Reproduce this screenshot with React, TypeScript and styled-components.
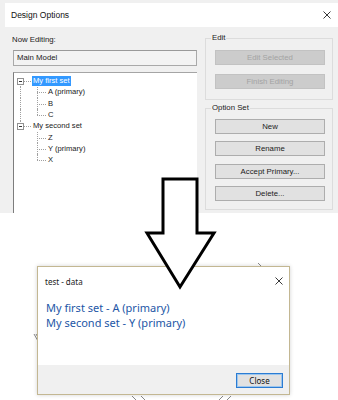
import React from 'react';
import styled, { createGlobalStyle } from 'styled-components';

const GlobalStyle = createGlobalStyle`
  html, body { margin: 0; padding: 0; background: #fff; }
  body { font-family: "Liberation Sans", Arial, sans-serif; }
  * { box-sizing: border-box; }
`;

const Page = styled.div`
  position: relative;
  width: 338px;
  height: 400px;
  overflow: hidden;
  background: #fff;
`;

/* ---------- Top dialog ---------- */
const Window = styled.div`
  width: 338px;
  height: 213px;
  background: #f0f0f0;
  padding: 3px 0 0 5px;
  display: flex;
  flex-direction: column;
`;

const TitleBar = styled.div`
  flex: none;
  height: 24px;
  background: #fff;
  display: flex;
  align-items: center;
  justify-content: space-between;
  padding: 0 7px 0 6px;
  font-family: "Liberation Sans", Arial, sans-serif;
  font-size: 8.5px;
  color: #111;
`;

const CloseGlyph = styled.svg`
  display: block;
  width: 8px;
  height: 8px;
`;

const Body = styled.div`
  flex: 1;
  min-height: 0;
  display: grid;
  grid-template-columns: 184px 128px;
  column-gap: 8px;
  padding-left: 8px;
`;

const LeftCol = styled.div`
  display: flex;
  flex-direction: column;
  min-height: 0;
  padding-top: 7px;
`;

const FieldLabel = styled.div`
  height: 12px;
  line-height: 12px;
  margin-left: -1px;
  font-size: 7.8px;
  color: #1a1a1a;
`;

const TextBox = styled.div`
  margin-top: 4px;
  height: 16px;
  border: 1px solid #a9a9a9;
  border-top-color: #9a9a9a;
  background: #f3f3f3;
  padding-left: 3px;
  font-size: 7.8px;
  line-height: 14px;
  color: #1a1a1a;
`;

const Tree = styled.div`
  margin-top: 6px;
  flex: 1;
  min-height: 0;
  background: #fff;
  border-top: 1px solid #a5a5a5;
  border-left: 1px solid #7d7d7d;
  padding-top: 2.4px;
  font-size: 7.6px;
  color: #1a1a1a;
`;

const Row = styled.div`
  display: flex;
  align-items: center;
  height: 11.3px;
`;

type VLine = 'full' | 'top' | 'bottom' | 'none';

const Gutter = styled.div<{ $w: number; $line: number; $v: VLine; $h?: boolean }>`
  position: relative;
  flex: none;
  align-self: stretch;
  width: ${(p) => p.$w}px;
  &::before {
    content: '';
    display: ${(p) => (p.$v === 'none' ? 'none' : 'block')};
    position: absolute;
    left: ${(p) => p.$line}px;
    top: ${(p) => (p.$v === 'bottom' ? '50%' : '0')};
    bottom: ${(p) => (p.$v === 'top' ? '50%' : '0')};
    border-left: 1px dotted #a0a0a0;
  }
  &::after {
    content: '';
    display: ${(p) => (p.$h ? 'block' : 'none')};
    position: absolute;
    left: ${(p) => p.$line}px;
    right: 1px;
    top: 50%;
    border-top: 1px dotted #a0a0a0;
  }
`;

const Expander = styled.span`
  position: absolute;
  z-index: 1;
  left: 3px;
  top: 50%;
  width: 7px;
  height: 7px;
  margin-top: -3px;
  border: 1px solid #919191;
  background: #fff;
  &::after {
    content: '';
    position: absolute;
    left: 1px;
    top: 2px;
    width: 3px;
    height: 1px;
    background: #333;
  }
`;

const NodeLabel = styled.span<{ $selected?: boolean }>`
  height: 10px;
  line-height: 10px;
  padding: 0 1px;
  white-space: nowrap;
  background: ${(p) => (p.$selected ? '#3399ff' : 'transparent')};
  color: ${(p) => (p.$selected ? '#fff' : '#1a1a1a')};
`;

const RightCol = styled.div`
  display: flex;
  flex-direction: column;
  gap: 3px;
  padding-top: 6px;
`;

const Group = styled.fieldset<{ $pt: number; $pb: number }>`
  margin: 0;
  min-width: 0;
  border: 1px solid #dcdcdc;
  padding: ${(p) => p.$pt}px 7px ${(p) => p.$pb}px 9px;
`;

const Legend = styled.legend`
  margin-left: -4px;
  padding: 0 1px;
  font-size: 7.8px;
  line-height: 10px;
  color: #1a1a1a;
`;

const Stack = styled.div<{ $gap: number }>`
  display: flex;
  flex-direction: column;
  gap: ${(p) => p.$gap}px;
`;

const Btn = styled.button`
  display: block;
  width: 100%;
  height: 15px;
  margin: 0;
  padding: 0;
  font-family: "Liberation Sans", Arial, sans-serif;
  font-size: 7.8px;
  line-height: 13px;
  color: #222;
  background: #e1e1e1;
  border: 1px solid #adadad;
  &:disabled {
    background: #cccccc;
    border-color: #c2c2c2;
    color: #a3a3a3;
  }
`;

/* ---------- Bottom part ---------- */
const Stage = styled.div`
  position: relative;
  height: 187px;
  padding: 53px 0 0 37px;
`;

const Scribbles = styled.svg`
  position: absolute;
  left: 0;
  top: 0;
  width: 338px;
  height: 187px;
  pointer-events: none;
`;

const Dialog = styled.div`
  position: relative;
  z-index: 1;
  width: 253px;
  height: 129px;
  background: #fff;
  border: 1px solid #c3b792;
  box-shadow: 0 0 4px rgba(0, 0, 0, 0.18);
  display: flex;
  flex-direction: column;
  font-family: "Noto Sans", "Open Sans", sans-serif;
`;

const DlgTitle = styled.div`
  flex: none;
  height: 28px;
  display: flex;
  align-items: center;
  justify-content: space-between;
  padding: 0 6px 0 7px;
  font-size: 8px;
  color: #222;
`;

const DlgContent = styled.div`
  flex: 1;
  padding: 4.5px 0 0 8px;
  font-family: "Noto Sans", "Open Sans", sans-serif;
  font-size: 11px;
  line-height: 15px;
  color: #2356a6;
`;

const Line = styled.div`
  white-space: nowrap;
`;

const DlgFooter = styled.div`
  flex: none;
  height: 29px;
  background: #f0f0f0;
  display: flex;
  justify-content: flex-end;
  align-items: flex-start;
  padding: 8px 6px 0 0;
`;

const DefaultBtn = styled.button`
  width: 47px;
  height: 15px;
  margin: 0;
  padding: 0;
  font-family: "Noto Sans", "Open Sans", sans-serif;
  font-size: 8px;
  line-height: 13px;
  color: #111;
  background: #e1e1e1;
  border: 1px solid #2b7cd3;
  box-shadow: inset 0 0 0 1px #9cc6ee;
`;

const Arrow = styled.svg`
  position: absolute;
  z-index: 2;
  left: 140px;
  top: 170px;
  width: 80px;
  height: 125px;
  pointer-events: none;
`;

type Node = { label: string; selected?: boolean; children?: string[] };

const tree: Node[] = [
  { label: 'My first set', selected: true, children: ['A (primary)', 'B', 'C'] },
  { label: 'My second set', children: ['Z', 'Y (primary)', 'X'] },
];

const X = () => (
  <CloseGlyph viewBox="0 0 8 8">
    <path d="M0.5 0.5 L7.5 7.5 M7.5 0.5 L0.5 7.5" stroke="#222" strokeWidth="0.9" fill="none" />
  </CloseGlyph>
);

export default function App() {
  return (
    <Page>
      <GlobalStyle />
      <Window>
        <TitleBar>
          <span>Design Options</span>
          <X />
        </TitleBar>
        <Body>
          <LeftCol>
            <FieldLabel>Now Editing:</FieldLabel>
            <TextBox>Main Model</TextBox>
            <Tree>
              {tree.map((n, i) => {
                const lastRoot = i === tree.length - 1;
                return (
                  <React.Fragment key={n.label}>
                    <Row>
                      <Gutter $w={18} $line={6} $v={i === 0 ? 'bottom' : lastRoot ? 'top' : 'full'} $h>
                        <Expander />
                      </Gutter>
                      <NodeLabel $selected={n.selected}>{n.label}</NodeLabel>
                    </Row>
                    {n.children?.map((c, j) => (
                      <Row key={c}>
                        <Gutter $w={18} $line={6} $v={lastRoot ? 'none' : 'full'} />
                        <Gutter $w={15} $line={5} $v={j === n.children!.length - 1 ? 'top' : 'full'} $h />
                        <NodeLabel>{c}</NodeLabel>
                      </Row>
                    ))}
                  </React.Fragment>
                );
              })}
            </Tree>
          </LeftCol>
          <RightCol>
            <Group $pt={7} $pb={10}>
              <Legend>Edit</Legend>
              <Stack $gap={9}>
                <Btn disabled>Edit Selected</Btn>
                <Btn disabled>Finish Editing</Btn>
              </Stack>
            </Group>
            <Group $pt={6} $pb={8}>
              <Legend>Option Set</Legend>
              <Stack $gap={7.4}>
                <Btn>New</Btn>
                <Btn>Rename</Btn>
                <Btn>Accept Primary...</Btn>
                <Btn>Delete...</Btn>
              </Stack>
            </Group>
          </RightCol>
        </Body>
      </Window>
      <Stage>
        <Scribbles viewBox="0 0 338 187">
          <g stroke="#6a6a6a" strokeWidth="0.8" fill="none">
            <path d="M34 121 L38 128 M36 121 L39 126" />
            <path d="M258 50 L263 55" />
            <path d="M132 183 L136 187 M141 183 L145 187" />
            <path d="M219 187 L223 183 M227 187 L231 183" />
          </g>
        </Scribbles>
        <Dialog>
          <DlgTitle>
            <span>test - data</span>
            <X />
          </DlgTitle>
          <DlgContent>
            <Line>My first set - A (primary)</Line>
            <Line>My second set - Y (primary)</Line>
          </DlgContent>
          <DlgFooter>
            <DefaultBtn>Close</DefaultBtn>
          </DlgFooter>
        </Dialog>
      </Stage>
      <Arrow viewBox="0 0 80 125">
        <polygon
          points="23,9 57,9 57,63 74,63 40,117 7,63 23,63"
          fill="#fff"
          stroke="#000"
          strokeWidth="3"
          strokeLinejoin="miter"
        />
      </Arrow>
    </Page>
  );
}
